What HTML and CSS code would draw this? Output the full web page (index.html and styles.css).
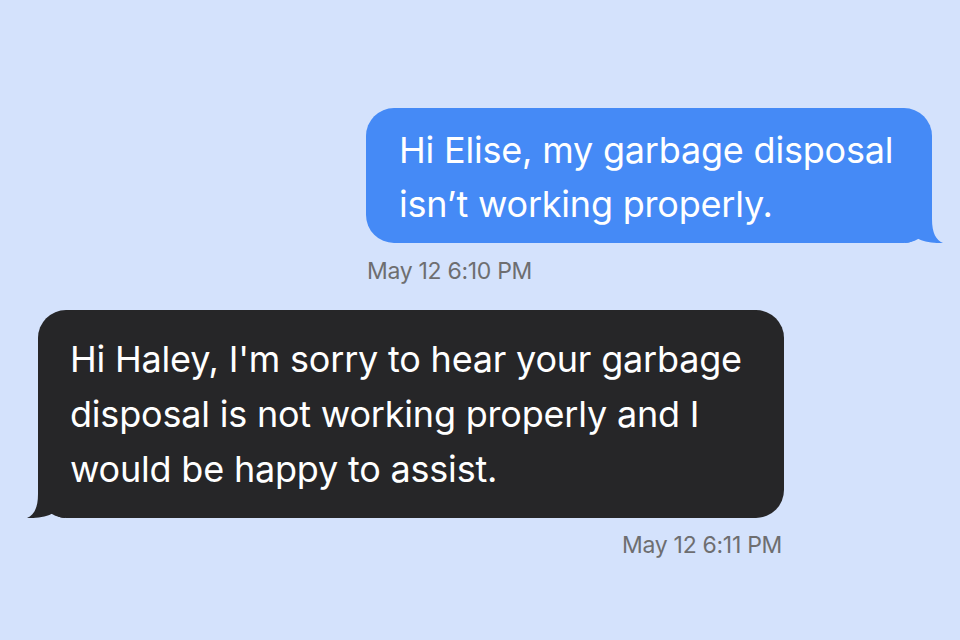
FILE: index.html
```html
<!DOCTYPE html>
<html lang="en">
<head>
<meta charset="UTF-8">
<meta name="viewport" content="width=device-width, initial-scale=1.0">
<title>Messages</title>
<link rel="stylesheet" href="styles.css">
</head>
<body>
  <div class="thread">
    <div class="msg msg-out">
      <div class="bubble">
        Hi Elise, my garbage disposal isn’t working properly.
        <svg class="tail" viewBox="0 0 38 38" width="38" height="38">
          <path d="M27 0 L27 14 C27 28 31 35 38 38 C31 38.5 17 37 12 33 C9 36 4 38 0 38 L0 0 Z"/>
        </svg>
      </div>
      <div class="time">May 12 6:10 PM</div>
    </div>

    <div class="msg msg-in">
      <div class="bubble">
        Hi Haley, I'm sorry to hear your garbage disposal is not working properly and I would be happy to assist.
        <svg class="tail" viewBox="0 0 38 38" width="38" height="38">
          <path d="M27 0 L27 14 C27 28 31 35 38 38 C31 38.5 17 37 12 33 C9 36 4 38 0 38 L0 0 Z"/>
        </svg>
      </div>
      <div class="time">May 12 6:11 PM</div>
    </div>
  </div>
</body>
</html>
```

FILE: styles.css
```css
body {
  margin: 0;
  background-color: #d4e2fc;
  font-family: Inter, "Noto Sans", sans-serif;
}
.thread {
  display: flex;
  flex-direction: column;
  padding: 108px 28px 0 38px;
}
.msg {
  display: flex;
  flex-direction: column;
}
.msg-out {
  align-self: flex-end;
  align-items: flex-start;
}
.msg-in {
  align-self: flex-start;
  align-items: flex-end;
  margin-top: 25px;
}
.bubble {
  position: relative;
  box-sizing: border-box;
  border-radius: 28px;
  color: #fff;
  font-size: 36px;
  letter-spacing: -0.2px;
}
.msg-out .bubble {
  width: 566px;
  padding: 15px 30px 12px 33px;
  line-height: 54px;
  background-color: #458af6;
  fill: #458af6;
}
.msg-in .bubble {
  width: 746px;
  padding: 22px 30px 21px 32px;
  line-height: 55px;
  background-color: #262628;
  fill: #262628;
}
.tail {
  position: absolute;
  bottom: 0;
  display: block;
}
.msg-out .tail {
  right: -11px;
}
.msg-in .tail {
  left: -11px;
  transform: scaleX(-1);
}
.time {
  color: #6e6e70;
  font-size: 23px;
  line-height: 28px;
  letter-spacing: -0.3px;
}
.msg-out .time {
  margin: 14px 0 0 1px;
}
.msg-in .time {
  margin: 13px 2px 0 0;
}
```
